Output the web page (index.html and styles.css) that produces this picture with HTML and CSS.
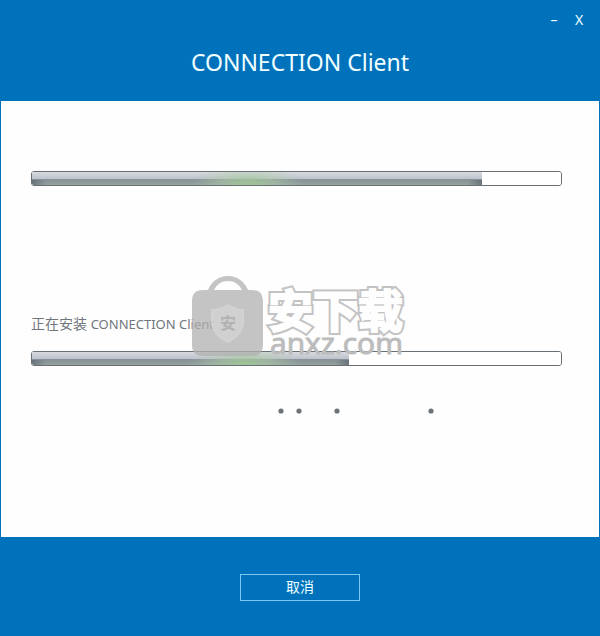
FILE: index.html
```html
<!DOCTYPE html>
<html lang="zh">
<head>
  <meta charset="UTF-8">
  <title>CONNECTION Client</title>
  <link rel="stylesheet" href="styles.css">
</head>
<body>

  <header class="header">
    <div class="window-btns">
      <button type="button" class="window-btn" aria-label="minimize">–</button>
      <button type="button" class="window-btn" aria-label="close">X</button>
    </div>
    <h1 class="title">CONNECTION Client</h1>
  </header>

  <main class="content">
    <progress class="bar" value="85" max="100" aria-label="total"></progress>

    <label class="status" for="installProgress">正在安装 <span class="status-name">CONNECTION Client</span></label>
    <progress id="installProgress" class="bar bar-step" value="60" max="100"></progress>

    <!-- busy dots -->
    <svg class="dots" width="160" height="6" viewBox="0 0 160 6">
      <circle cx="3" cy="3" r="2.6"/>
      <circle cx="21" cy="3" r="2.6"/>
      <circle cx="59" cy="3" r="2.6"/>
      <circle cx="153" cy="3" r="2.6"/>
    </svg>

    <!-- watermark -->
    <div class="watermark">
      <svg class="bag" width="71" height="81" viewBox="0 0 71 81">
        <path class="bag-body" fill-rule="evenodd" d="M11 14H16C20 5 27 0 36 0S52 5 56 14H60Q71 14 71 25V69Q71 80 60 80H11Q0 80 0 69V25Q0 14 11 14ZM22 14H50C47 8 42 5 36 5S25 8 22 14Z"/>
        <path class="bag-shield" d="M36 29Q43 34 51 34V46Q51 58 36 66Q20 58 20 46V34Q29 34 36 29Z"/>
        <text class="bag-text" x="36" y="53" text-anchor="middle">安</text>
      </svg>
      <div class="brand">
        <span class="brand-name" data-text="安下载">安下载</span>
        <span class="brand-site">anxz.com</span>
      </div>
    </div>
  </main>

  <footer class="footer">
    <button type="button" class="cancel-btn">取消</button>
  </footer>

</body>
</html>
```

FILE: styles.css
```css
* {
  box-sizing: border-box;
}

body {
  display: flex;
  flex-direction: column;
  min-height: 100vh;
  margin: 0;
  background-color: #0072bc;
  font-family: "Noto Sans", "Noto Sans CJK SC", sans-serif;
}

.header {
  padding: 10px 11px 23px;
  color: #f0ffff;
}

.window-btns {
  display: flex;
  justify-content: flex-end;
  gap: 5px;
}

.window-btn {
  width: 20px;
  height: 20px;
  padding: 0;
  border: none;
  background: none;
  color: inherit;
  font-family: inherit;
  font-size: 14px;
  line-height: 20px;
  cursor: pointer;
}

.title {
  margin: 16px 0 0;
  font-size: 23px;
  font-weight: normal;
  line-height: 32px;
  text-align: center;
}

.content {
  position: relative;
  display: flex;
  flex: 1;
  flex-direction: column;
  margin: 0 1px;
  padding: 70px 37px 0 30px;
  background-color: #fefefe;
}

.bar {
  display: block;
  width: 100%;
  height: 15px;
  border: 1px solid #687076;
  border-radius: 3px;
  background-color: #fff;
  overflow: hidden;
  appearance: none;
}

.bar::-webkit-progress-bar {
  background-color: #fff;
}

.bar::-webkit-progress-value {
  background:
    linear-gradient(to right, rgba(80, 90, 102, 0.6), transparent 14px) 0 8px no-repeat,
    linear-gradient(to left, rgba(80, 90, 102, 0.6), transparent 14px) 0 8px no-repeat,
    radial-gradient(ellipse 56px 20px at 48% 12px, rgba(160, 200, 150, 0.9), rgba(175, 205, 170, 0.5) 50%, transparent),
    linear-gradient(#d8dadf, #bec2cd 7px, #87919a 7px, #8b9698 10px, #98a39f);
}

.bar-step::-webkit-progress-value {
  background:
    linear-gradient(to right, rgba(80, 90, 102, 0.6), transparent 14px) 0 8px no-repeat,
    linear-gradient(to left, rgba(80, 90, 102, 0.6), transparent 14px) 0 8px no-repeat,
    radial-gradient(ellipse 56px 20px at 67% 12px, rgba(160, 200, 150, 0.9), rgba(175, 205, 170, 0.5) 50%, transparent),
    linear-gradient(#d8dadf, #bec2cd 7px, #87919a 7px, #8b9698 10px, #98a39f);
}

.status {
  margin-top: 128px;
  margin-bottom: 17px;
  color: #70767c;
  font-size: 14px;
  line-height: 20px;
}

.status-name {
  font-size: 13px;
}

.dots {
  margin-top: 42px;
  margin-left: 247px;
  fill: #6e7378;
}

.watermark {
  position: absolute;
  top: 175px;
  left: 191px;
  display: flex;
  gap: 5px;
  pointer-events: none;
}

.bag-body {
  fill: rgba(176, 176, 176, 0.75);
}

.bag-shield {
  fill: rgba(220, 220, 220, 0.5);
  stroke: #d2d2d2;
  stroke-width: 2;
}

.bag-text {
  fill: #b2b2b2;
  font-family: "Noto Sans CJK SC", sans-serif;
  font-size: 16px;
  font-weight: bold;
}

.brand {
  display: flex;
  flex-direction: column;
  padding-top: 11px;
}

.brand-name,
.brand-name::after {
  font-family: "Noto Sans CJK SC", sans-serif;
  font-size: 45px;
  font-weight: bold;
  line-height: 44px;
  stroke-linejoin: round;
}

.brand-name {
  position: relative;
  color: #c3c3c3;
  -webkit-text-stroke: 6px #c3c3c3;
}

/* white core over the grey outline */
.brand-name::after {
  content: attr(data-text);
  position: absolute;
  top: 0;
  left: 0;
  color: #fefefe;
  -webkit-text-stroke: 2px #fefefe;
}

.brand-site {
  padding-left: 2px;
  color: #bcbcbc;
  font-family: "Open Sans", sans-serif;
  font-size: 30px;
  line-height: 24px;
  -webkit-text-stroke: 1px #bcbcbc;
}

.footer {
  display: flex;
  justify-content: center;
  padding: 37px 0 35px;
}

.cancel-btn {
  width: 120px;
  height: 27px;
  padding: 0 0 4px;
  border: 1px solid #7cc8f0;
  background: none;
  color: #f0ffff;
  font-family: "Noto Sans CJK SC", sans-serif;
  font-size: 14px;
  line-height: 20px;
  cursor: pointer;
}
```
